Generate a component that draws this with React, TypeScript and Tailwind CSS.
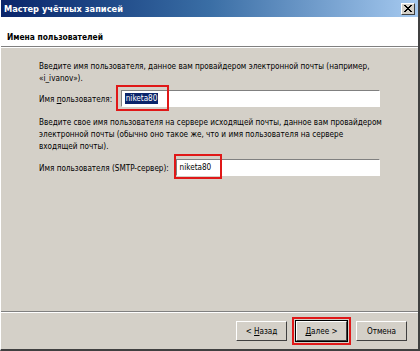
import React from "react";

const font = { fontFamily: '"DejaVu Sans Condensed", "Liberation Sans", sans-serif' };

const raised =
  "bg-[#d4d0c8] border border-t-white border-l-white border-r-[#404040] border-b-[#404040]";

export default function App() {
  return (
    <div
      className="w-[420px] h-[351px] flex flex-col bg-[#d4d0c8] border-r-2 border-b-2 border-r-[#404040] border-b-[#404040] border-l border-l-white overflow-hidden whitespace-nowrap"
      style={font}
    >
      {/* title bar */}
      <div className="h-[17px] flex items-center justify-between pl-[3px] pr-[3px] bg-gradient-to-r from-[#0a246a] via-[#3a6ea5] to-[#a6caf0]">
        <span className="text-[9.2px] font-bold text-white">Мастер учётных записей</span>
        <div className={`w-[14px] h-[12px] flex items-center justify-center ${raised}`}>
          <svg width="8" height="7" viewBox="0 0 8 7">
            <path d="M0 0 L7 7 M1 0 L8 7 M7 0 L0 7 M8 0 L1 7" stroke="black" strokeWidth="1" />
          </svg>
        </div>
      </div>

      {/* header */}
      <div className="h-[30px] bg-white pl-[6px] pt-[6px] border-b border-b-[#808080]">
        <span className="text-[8.4px] font-bold text-black">Имена пользователей</span>
      </div>
      <div className="h-px bg-white" />

      {/* body */}
      <div className="flex-1 flex flex-col pl-[38px] pr-[38px] pt-[12px] text-[8.1px] leading-[12px] text-black">
        <p>
          Введите имя пользователя, данное вам провайдером электронной почты (например,
          <br />
          «i_ivanov»).
        </p>

        <div className="mt-[6px] flex items-center">
          <span className="w-[82px]">
            Имя <u>п</u>ользователя:
          </span>
          <div className="relative w-[260px] h-[17px] bg-white border border-t-[#808080] border-l-[#808080] border-r-white border-b-white flex items-center pl-[3px]">
            <span className="bg-[#0a246a] text-white px-px leading-[11px]">niketa80</span>
            <div className="absolute -left-[6px] -top-[6px] w-[53px] h-[26px] border-2 border-[#e01818]" />
          </div>
        </div>

        <p className="mt-[9px]">
          Введите свое имя пользователя на сервере исходящей почты, данное вам провайдером
          <br />
          электронной почты (обычно оно такое же, что и имя пользователя на сервере
          <br />
          входящей почты).
        </p>

        <div className="mt-[7px] flex items-center">
          <span className="w-[137px]">Имя пользователя (SMTP-сервер):</span>
          <div className="relative w-[205px] h-[17px] bg-white border border-t-[#808080] border-l-[#808080] border-r-white border-b-white flex items-center pl-[3px]">
            <span className="leading-[11px]">niketa80</span>
            <div className="absolute -left-[3px] -top-[6px] w-[48px] h-[25px] border-2 border-[#e01818]" />
          </div>
        </div>
      </div>

      {/* footer */}
      <div className="h-px bg-[#808080]" />
      <div className="h-px bg-white" />
      <div className="h-[36px] flex items-center justify-end pr-[11px] gap-[9px] text-[8.1px]">
        <div className={`w-[51px] h-[20px] flex items-center justify-center ${raised}`}>
          &lt;&nbsp;<u>Н</u>азад
        </div>
        <div className="relative">
          <div className={`w-[51px] h-[20px] flex items-center justify-center ${raised} outline outline-1 outline-black`}>
            <u>Д</u>алее&nbsp;&gt;
          </div>
          <div className="absolute -left-[4px] -top-[4px] w-[59px] h-[28px] border-2 border-[#e01818]" />
        </div>
        <div className={`w-[51px] h-[20px] flex items-center justify-center ${raised}`}>Отмена</div>
      </div>
    </div>
  );
}
